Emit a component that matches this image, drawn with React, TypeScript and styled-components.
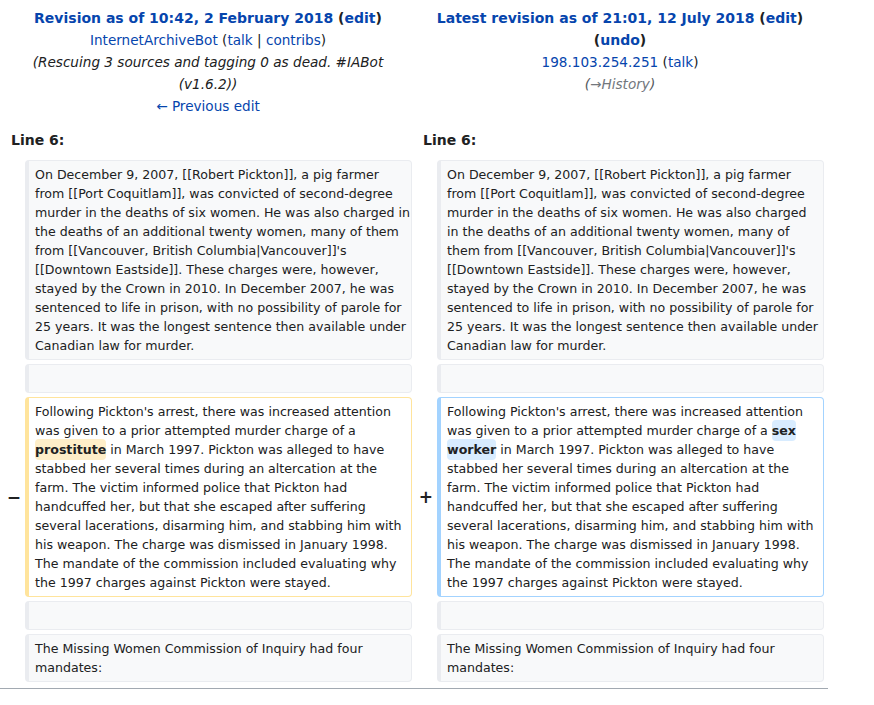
import React from "react";
import styled, { createGlobalStyle } from "styled-components";

const Global = createGlobalStyle`
  html, body { margin: 0; padding: 0; background: #ffffff; }
  body { font-family: "DejaVu Sans", "Liberation Sans", sans-serif; color: #202122; }
`;

const Page = styled.div`
  width: 828px;
`;

const DiffTable = styled.table`
  width: 828px;
  border-spacing: 4px;
  table-layout: fixed;
  border-collapse: separate;
`;

const MarkerCol = styled.col`
  width: 17px;
`;

const ContentCol = styled.col``;

const TitleCell = styled.td`
  text-align: center;
  vertical-align: top;
  font-size: 13.6px;
  line-height: 22px;
  padding: 3px 4px 3px;
`;

const Strong = styled.span`
  font-weight: bold;
  font-size: 14px;
`;

const Link = styled.a<{ $grey?: boolean }>`
  color: ${(p) => (p.$grey ? "#72777d" : "#0645ad")};
  text-decoration: none;
  cursor: pointer;
`;

const Comment = styled.span<{ $muted?: boolean }>`
  font-style: italic;
  color: ${(p) => (p.$muted ? "#54595d" : "#202122")};
`;

const LineNo = styled.td`
  font-weight: bold;
  font-size: 14px;
  line-height: 19px;
  padding: 7px 7px 6px;
`;

const Marker = styled.td`
  text-align: right;
  vertical-align: middle;
  font-weight: bold;
  font-size: 17px;
  line-height: 20px;
  padding: 0 0 0 0;
  color: #202122;
`;

type Kind = "context" | "deleted" | "added";

const borderColor: Record<Kind, string> = {
  context: "#eaecf0",
  deleted: "#ffe49c",
  added: "#a3d3ff",
};

const Cell = styled.td<{ $kind: Kind }>`
  vertical-align: top;
  font-size: 12.6px;
  line-height: 19px;
  padding: 4px 3px 4px 6px;
  background: ${(p) => (p.$kind === "context" ? "#f8f9fa" : "#ffffff")};
  border: 1px solid ${(p) => borderColor[p.$kind]};
  border-left-width: 4px;
  border-radius: 4px;
  color: #202122;
  white-space: nowrap;
  overflow: hidden;
`;

const Change = styled.span<{ $kind: "deleted" | "added" }>`
  font-weight: bold;
  background: ${(p) => (p.$kind === "deleted" ? "#feeec8" : "#d8ecff")};
  border-radius: 4px;
  padding: 3px 0;
`;

const BottomRule = styled.div`
  width: 828px;
  margin-top: 2px;
  border-top: 1px solid #a2a9b1;
`;

const Lines: React.FC<{ lines: React.ReactNode[] }> = ({ lines }) => (
  <>
    {lines.map((l, i) => (
      <React.Fragment key={i}>
        {l}
        {i < lines.length - 1 && <br />}
      </React.Fragment>
    ))}
  </>
);

const firstLeft = [
  "On December 9, 2007, [[Robert Pickton]], a pig farmer",
  "from [[Port Coquitlam]], was convicted of second-degree",
  "murder in the deaths of six women. He was also charged in",
  "the deaths of an additional twenty women, many of them",
  "from [[Vancouver, British Columbia|Vancouver]]'s",
  "[[Downtown Eastside]]. These charges were, however,",
  "stayed by the Crown in 2010. In December 2007, he was",
  "sentenced to life in prison, with no possibility of parole for",
  "25 years. It was the longest sentence then available under",
  "Canadian law for murder.",
];

const firstRight = [
  "On December 9, 2007, [[Robert Pickton]], a pig farmer",
  "from [[Port Coquitlam]], was convicted of second-degree",
  "murder in the deaths of six women. He was also charged",
  "in the deaths of an additional twenty women, many of",
  "them from [[Vancouver, British Columbia|Vancouver]]'s",
  "[[Downtown Eastside]]. These charges were, however,",
  "stayed by the Crown in 2010. In December 2007, he was",
  "sentenced to life in prison, with no possibility of parole for",
  "25 years. It was the longest sentence then available under",
  "Canadian law for murder.",
];

const tail = [
  "stabbed her several times during an altercation at the",
  "farm. The victim informed police that Pickton had",
  "handcuffed her, but that she escaped after suffering",
  "several lacerations, disarming him, and stabbing him with",
  "his weapon. The charge was dismissed in January 1998.",
  "The mandate of the commission included evaluating why",
  "the 1997 charges against Pickton were stayed.",
];

const deletedLines: React.ReactNode[] = [
  "Following Pickton's arrest, there was increased attention",
  "was given to a prior attempted murder charge of a",
  <>
    <Change $kind="deleted">prostitute</Change> in March 1997. Pickton was alleged to have
  </>,
  ...tail,
];

const addedLines: React.ReactNode[] = [
  "Following Pickton's arrest, there was increased attention",
  <>
    was given to a prior attempted murder charge of a <Change $kind="added">sex</Change>
  </>,
  <>
    <Change $kind="added">worker</Change> in March 1997. Pickton was alleged to have
  </>,
  ...tail,
];

const lastLines = ["The Missing Women Commission of Inquiry had four", "mandates:"];

export default function App() {
  return (
    <Page>
      <Global />
      <DiffTable>
        <colgroup>
          <MarkerCol />
          <ContentCol />
          <MarkerCol />
          <ContentCol />
        </colgroup>
        <tbody>
          <tr>
            <TitleCell colSpan={2}>
              <Strong>
                <Link>Revision as of 10:42, 2 February 2018</Link> (<Link>edit</Link>)
              </Strong>
              <br />
              <Link>InternetArchiveBot</Link> (<Link>talk</Link> | <Link>contribs</Link>)
              <br />
              <Comment>(Rescuing 3 sources and tagging 0 as dead. #IABot (v1.6.2))</Comment>
              <br />
              <Link>← Previous edit</Link>
            </TitleCell>
            <TitleCell colSpan={2}>
              <Strong>
                <Link>Latest revision as of 21:01, 12 July 2018</Link> (<Link>edit</Link>)
                <br />(<Link>undo</Link>)
              </Strong>
              <br />
              <Link>198.103.254.251</Link> (<Link>talk</Link>)
              <br />
              <Comment $muted>
                (<Link $grey>→History</Link>)
              </Comment>
            </TitleCell>
          </tr>
          <tr>
            <LineNo colSpan={2}>Line 6:</LineNo>
            <LineNo colSpan={2}>Line 6:</LineNo>
          </tr>
          <tr>
            <Marker />
            <Cell $kind="context">
              <Lines lines={firstLeft} />
            </Cell>
            <Marker />
            <Cell $kind="context">
              <Lines lines={firstRight} />
            </Cell>
          </tr>
          <tr>
            <Marker />
            <Cell $kind="context">
              <br />
            </Cell>
            <Marker />
            <Cell $kind="context">
              <br />
            </Cell>
          </tr>
          <tr>
            <Marker>−</Marker>
            <Cell $kind="deleted">
              <Lines lines={deletedLines} />
            </Cell>
            <Marker>+</Marker>
            <Cell $kind="added">
              <Lines lines={addedLines} />
            </Cell>
          </tr>
          <tr>
            <Marker />
            <Cell $kind="context">
              <br />
            </Cell>
            <Marker />
            <Cell $kind="context">
              <br />
            </Cell>
          </tr>
          <tr>
            <Marker />
            <Cell $kind="context">
              <Lines lines={lastLines} />
            </Cell>
            <Marker />
            <Cell $kind="context">
              <Lines lines={lastLines} />
            </Cell>
          </tr>
        </tbody>
      </DiffTable>
      <BottomRule />
    </Page>
  );
}
